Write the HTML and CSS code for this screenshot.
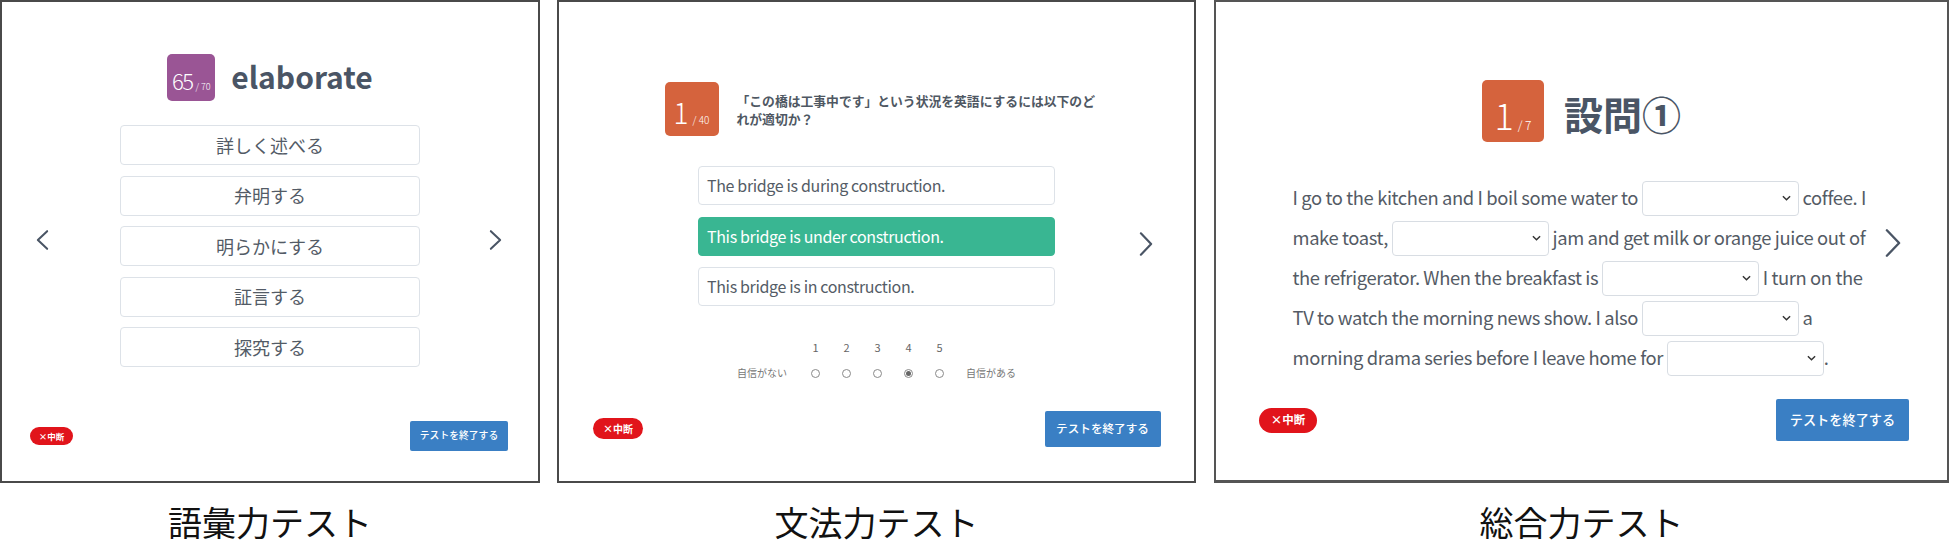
FILE: index.html
```html
<!DOCTYPE html>
<html lang="ja">
<head>
<meta charset="utf-8">
<title>テスト画面</title>
<link rel="stylesheet" href="styles.css">
</head>
<body>
<div class="row">
  <div class="col col-1">
    <div class="panel p1">
      <div class="head">
        <div class="badge purple"><span class="bn"><span class="num">65</span><span class="of">/ 70</span></span></div>
        <div class="word">elaborate</div>
      </div>
      <div class="opts">
        <div class="opt">詳しく述べる</div>
        <div class="opt">弁明する</div>
        <div class="opt">明らかにする</div>
        <div class="opt">証言する</div>
        <div class="opt">探究する</div>
      </div>
      <div class="nav nav-l"><svg viewBox="0 0 14 22" width="13" height="21"><polyline points="12,1.5 2,11 12,20.5" fill="none" stroke="#4a5565" stroke-width="2.2" stroke-linecap="round" stroke-linejoin="round"/></svg></div>
      <div class="nav nav-r"><svg viewBox="0 0 14 22" width="13" height="21"><polyline points="2,1.5 12,11 2,20.5" fill="none" stroke="#4a5565" stroke-width="2.2" stroke-linecap="round" stroke-linejoin="round"/></svg></div>
      <div class="foot">
        <div class="pill">×中断</div>
        <div class="btn">テストを終了する</div>
      </div>
    </div>
    <div class="caption">語彙力テスト</div>
  </div>

  <div class="col col-2">
    <div class="panel p2">
      <div class="head">
        <div class="badge orange"><span class="bn"><span class="num">1</span><span class="of">/ 40</span></span></div>
        <div class="question">「この橋は工事中です」という状況を英語にするには以下のど<br>れが適切か？</div>
      </div>
      <div class="opts">
        <div class="opt">The bridge is during construction.</div>
        <div class="opt selected">This bridge is under construction.</div>
        <div class="opt">This bridge is in construction.</div>
      </div>
      <div class="rating">
        <span></span><span class="n">1</span><span class="n">2</span><span class="n">3</span><span class="n">4</span><span class="n">5</span><span></span>
        <span class="lab-l">自信がない</span>
        <span class="rc"><span class="radio"></span></span>
        <span class="rc"><span class="radio"></span></span>
        <span class="rc"><span class="radio"></span></span>
        <span class="rc"><span class="radio on"></span></span>
        <span class="rc"><span class="radio"></span></span>
        <span class="lab-r">自信がある</span>
      </div>
      <div class="nav nav-r"><svg viewBox="0 0 15 26" width="14" height="25"><polyline points="2,1.5 13,13 2,24.5" fill="none" stroke="#4a5565" stroke-width="2.3" stroke-linecap="round" stroke-linejoin="round"/></svg></div>
      <div class="foot">
        <div class="pill">×中断</div>
        <div class="btn">テストを終了する</div>
      </div>
    </div>
    <div class="caption">文法力テスト</div>
  </div>

  <div class="col col-3">
    <div class="panel p3">
      <div class="head">
        <div class="badge orange"><span class="bn"><span class="num">1</span><span class="of">/ 7</span></span></div>
        <div class="title">設問①</div>
      </div>
      <p class="para">I go to the kitchen and I boil some water to <span class="sel"><svg viewBox="0 0 10 6" width="9" height="6"><polyline points="1,1 5,5 9,1" fill="none" stroke="#333" stroke-width="1.6"/></svg></span> coffee. I<br>make toast, <span class="sel"><svg viewBox="0 0 10 6" width="9" height="6"><polyline points="1,1 5,5 9,1" fill="none" stroke="#333" stroke-width="1.6"/></svg></span> jam and get milk or orange juice out of<br>the refrigerator. When the breakfast is <span class="sel"><svg viewBox="0 0 10 6" width="9" height="6"><polyline points="1,1 5,5 9,1" fill="none" stroke="#333" stroke-width="1.6"/></svg></span> I turn on the<br>TV to watch the morning news show. I also <span class="sel"><svg viewBox="0 0 10 6" width="9" height="6"><polyline points="1,1 5,5 9,1" fill="none" stroke="#333" stroke-width="1.6"/></svg></span> a<br>morning drama series before I leave home for <span class="sel"><svg viewBox="0 0 10 6" width="9" height="6"><polyline points="1,1 5,5 9,1" fill="none" stroke="#333" stroke-width="1.6"/></svg></span>.</p>
      <div class="nav nav-r"><svg viewBox="0 0 17 30" width="16" height="29"><polyline points="2,1.5 15,15 2,28.5" fill="none" stroke="#4a5565" stroke-width="2.5" stroke-linecap="round" stroke-linejoin="round"/></svg></div>
      <div class="foot">
        <div class="pill">×中断</div>
        <div class="btn">テストを終了する</div>
      </div>
    </div>
    <div class="caption">総合力テスト</div>
  </div>
</div>
</body>
</html>
```

FILE: styles.css
```css
* { box-sizing: border-box; }

body {
  margin: 0;
  background: #fff;
  font-family: "Noto Sans CJK JP", "Noto Sans", sans-serif;
  width: 1950px;
  height: 549px;
  overflow: hidden;
}

.row { display: flex; align-items: flex-start; }

.col { display: flex; flex-direction: column; align-items: center; }
.col-1 { width: 540px; }
.col-2 { width: 639px; margin-left: 17px; }
.col-3 { width: 735px; margin-left: 18px; }

.panel {
  width: 100%;
  height: 483px;
  border: 2px solid #4a4a4a;
  position: relative;
  display: flex;
  flex-direction: column;
  background: #fff;
}
.p3 { border-color: #555; border-bottom-width: 3px; }

.caption {
  margin-top: 22px;
  font-size: 34px;
  line-height: 34px;
  color: #111;
  font-weight: 400;
}

/* header */
.head { display: flex; justify-content: center; align-items: center; }

.badge {
  display: flex;
  align-items: center;
  justify-content: center;
  color: #fff;
  border-radius: 5px;
  font-weight: 300;
  line-height: 1;
  flex: none;
}
.badge .bn { white-space: nowrap; }
.purple { background: #9a5595; }
.orange { background: #d5633d; }

.p1 .head { padding-top: 52px; gap: 16px; }
.p1 .badge { width: 48px; height: 47px; padding-top: 5px; }
.p1 .num { font-size: 22px; letter-spacing: -1.5px; }
.p1 .of { font-size: 9px; margin-left: 3px; }

.word {
  font-size: 30px;
  font-weight: 700;
  color: #4a5565;
  line-height: 1;
  padding-bottom: 4px;
}

.p2 .head { padding-top: 80px; gap: 18px; }
.p2 .badge { width: 54px; height: 54px; padding-top: 6px; }
.p2 .num { font-size: 28px; }
.p2 .of { font-size: 10px; margin-left: 4px; }

.question {
  width: 352px;
  white-space: nowrap;
  font-size: 12.8px;
  line-height: 18.5px;
  font-weight: 700;
  color: #4f5863;
  padding-top: 2px;
}

.p3 .head { padding-top: 78px; gap: 20px; }
.p3 .badge { width: 62px; height: 62px; padding-top: 6px; }
.p3 .num { font-size: 36px; }
.p3 .of { font-size: 12px; margin-left: 4px; }

.title {
  font-size: 39px;
  font-weight: 700;
  color: #4a5565;
  line-height: 1;
  padding-top: 4px;
}

/* options */
.opts { display: flex; flex-direction: column; margin: 0 auto; }
.opt {
  border: 1px solid #dde2e8;
  border-radius: 4px;
  display: flex;
  align-items: center;
  background: #fff;
}

.p1 .opts { width: 300px; margin-top: 24px; gap: 10.6px; }
.p1 .opt { height: 40px; justify-content: center; font-size: 18px; color: #535b66; padding-bottom: 1px; }

.p2 .opts { width: 357px; margin-top: 30px; gap: 11.5px; }
.p2 .opt { height: 39px; padding-left: 8px; font-size: 16px; letter-spacing: -0.35px; color: #545c66; padding-bottom: 1px; }
.p2 .opt.selected { background: #39b692; border-color: #39b692; color: #fff; }

/* rating */
.rating {
  display: grid;
  grid-template-columns: 63px repeat(5, 31px) 61px;
  grid-auto-rows: 16px;
  row-gap: 10px;
  justify-content: center;
  margin-top: 33px;
  align-items: center;
}
.rating .n { font-size: 11px; color: #666; text-align: center; line-height: 16px; }
.lab-l, .lab-r { font-size: 10px; color: #777; line-height: 16px; white-space: nowrap; }
.lab-r { text-align: right; }
.rc { display: flex; justify-content: center; align-items: center; }
.radio {
  width: 9px;
  height: 9px;
  border: 1px solid #8a8a8a;
  border-radius: 50%;
  background: #fff;
  display: flex;
  align-items: center;
  justify-content: center;
}
.radio.on::after {
  content: "";
  width: 5px;
  height: 5px;
  border-radius: 50%;
  background: #666;
}

/* paragraph */
.para {
  width: 578px;
  margin: 35px auto 0;
  font-size: 18.4px;
  letter-spacing: -0.38px;
  line-height: 40px;
  color: #545b65;
  white-space: nowrap;
}
.sel {
  display: inline-flex;
  align-items: center;
  justify-content: flex-end;
  width: 157px;
  height: 35px;
  border: 1px solid #d8dde3;
  border-radius: 4px;
  vertical-align: middle;
  padding-right: 7px;
  margin-top: -4px;
  background: #fff;
}

/* nav arrows */
.nav { position: absolute; top: 50%; transform: translateY(-50%); display: flex; }
.p1 .nav-l { left: 34px; margin-top: -2px; }
.p1 .nav-r { right: 36px; margin-top: -2px; }
.p2 .nav-r { right: 41px; margin-top: 2px; }
.p3 .nav-r { right: 46px; margin-top: 2px; }

/* footer */
.foot {
  margin-top: auto;
  display: flex;
  justify-content: space-between;
  align-items: center;
}
.pill {
  background: #e1141b;
  color: #fff;
  border-radius: 999px;
  font-weight: 700;
  display: flex;
  align-items: center;
  justify-content: center;
  line-height: 1;
}
.btn {
  background: #3a7fc4;
  color: #fff;
  border-radius: 2px;
  font-weight: 500;
  display: flex;
  align-items: center;
  justify-content: center;
  line-height: 1;
}

.p1 .foot { padding: 0 30px 30px 28px; }
.p1 .pill { width: 43px; height: 18px; font-size: 8.5px; }
.p1 .btn { width: 98px; height: 30px; font-size: 9.8px; }

.p2 .foot { padding: 0 33.5px 34.5px 34px; }
.p2 .pill { width: 50px; height: 21px; font-size: 10px; }
.p2 .btn { width: 116px; height: 36px; font-size: 11.6px; }

.p3 .foot { padding: 0 38px 39px 43px; }
.p3 .pill { width: 58px; height: 25px; font-size: 11.5px; }
.p3 .btn { width: 133px; height: 42px; font-size: 13.2px; }
```
